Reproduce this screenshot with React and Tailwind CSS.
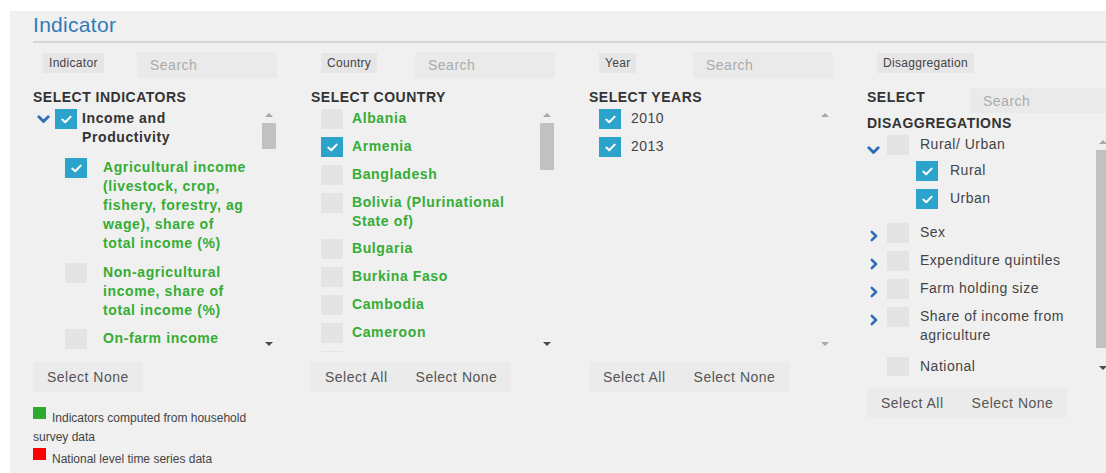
import React from 'react';

const FONT = "font-['Liberation_Sans',Arial,sans-serif]";
const GREEN = 'text-[14px] font-bold leading-[19px] tracking-[0.6px] text-[#35ad35]';
const PLAIN = 'text-[14px] leading-[19px] tracking-[0.5px] text-[#444]';
const HEAD = 'text-[14px] font-bold leading-[16px] tracking-[0.5px] text-[#333]';

function Box({ checked }) {
  if (checked) {
    return (
      <span className="flex h-[20px] w-[22px] shrink-0 items-center justify-center bg-[#2ba3ca]">
        <svg width="11" height="9" viewBox="0 0 11 9" fill="none">
          <path d="M1.3 4.6 L4.2 7.3 L9.7 1.6" stroke="#fff" strokeWidth="2" strokeLinecap="round" strokeLinejoin="round" />
        </svg>
      </span>
    );
  }
  return <span className="block h-[20px] w-[22px] shrink-0 bg-[#e4e4e4]" />;
}

function ChevronDown() {
  return (
    <svg width="13" height="9" viewBox="0 0 13 9" fill="none">
      <path d="M1.8 1.8 L6.5 6.6 L11.2 1.8" stroke="#2d6db4" strokeWidth="2.8" strokeLinecap="round" strokeLinejoin="round" />
    </svg>
  );
}

function ChevronRight() {
  return (
    <svg width="8" height="12" viewBox="0 0 8 12" fill="none">
      <path d="M1.8 1.8 L6 6 L1.8 10.2" stroke="#2d6db4" strokeWidth="2.6" strokeLinecap="round" strokeLinejoin="round" />
    </svg>
  );
}

function Scrollbar({ thumb, downDark = true }) {
  return (
    <div className="flex h-full w-[14px] shrink-0 flex-col items-center">
      <div className="flex h-[16px] items-center">
        <span className="h-0 w-0 border-x-[4.5px] border-b-[4px] border-x-transparent border-b-[#a8a8a8]" />
      </div>
      {thumb ? <div className={`w-[14px] bg-[#c1c1c1] ${thumb}`} /> : null}
      <div className="flex-1" />
      <div className="flex h-[16px] items-center">
        {downDark ? (
          <span className="h-0 w-0 border-x-[4px] border-t-[4px] border-x-transparent border-t-[#4a4a4a]" />
        ) : (
          <span className="h-0 w-0 border-x-[4px] border-t-[4px] border-x-transparent border-t-[#a8a8a8]" />
        )}
      </div>
    </div>
  );
}

function Search({ h26 = true }) {
  return (
    <input
      placeholder="Search"
      className={`w-[140px] shrink-0 bg-[#eaeaea] pl-[13px] text-[14px] tracking-[0.5px] outline-none placeholder:text-[#ababab] ${h26 ? 'h-[26px]' : 'h-[25px]'}`}
    />
  );
}

function ColumnHead({ tag, search = true }) {
  return (
    <div className="flex h-[26px] items-start">
      <div className="flex w-[104px] shrink-0 pl-[10px]">
        <span className="mt-[1px] h-[20px] bg-[#e6e6e6] px-[6px] text-[12px] leading-[20px] tracking-[0.3px] text-[#444]">
          {tag}
        </span>
      </div>
      {search ? <Search /> : null}
    </div>
  );
}

function Buttons({ all = true, className = '' }) {
  const btn = 'h-[30px] px-[14px] text-[14px] tracking-[0.5px] text-[#555]';
  return (
    <div className={`flex w-fit bg-[#ebebeb] ${className}`}>
      {all ? <button className={btn}>Select All</button> : null}
      <button className={btn}>Select None</button>
    </div>
  );
}

function IndicatorColumn() {
  return (
    <div className="w-[278px] shrink-0">
      <ColumnHead tag="Indicator" />
      <div className={`mt-[11px] ${HEAD}`}>SELECT INDICATORS</div>
      <div className="mt-[2px] flex h-[245px] w-[243px]">
        <div className="flex-1 overflow-hidden pt-[2px]">
          <div className="flex items-start">
            <div className="flex h-[20px] w-[22px] shrink-0 items-center pl-[4px]">
              <ChevronDown />
            </div>
            <Box checked />
            <span className="ml-[5px] w-[150px] text-[14px] font-bold leading-[19px] tracking-[0.6px] text-[#333]">
              Income and Productivity
            </span>
          </div>
          <div className="mt-[11px] flex items-start pl-[32px]">
            <Box checked />
            <span className={`ml-[16px] w-[146px] ${GREEN}`}>
              Agricultural income (livestock, crop, fishery, forestry, ag wage), share of total income (%)
            </span>
          </div>
          <div className="mt-[10px] flex items-start pl-[32px]">
            <Box />
            <span className={`ml-[16px] w-[146px] ${GREEN}`}>Non-agricultural income, share of total income (%)</span>
          </div>
          <div className="mt-[9px] flex items-start pl-[32px]">
            <Box />
            <span className={`ml-[16px] w-[146px] ${GREEN}`}>On-farm income</span>
          </div>
        </div>
        <Scrollbar thumb="h-[26px]" />
      </div>
      <Buttons all={false} className="mt-[10px]" />
      <div className="mt-[15px] w-[245px] text-[12px] leading-[19px] text-[#444]">
        <p>
          <span className="mr-[6px] inline-block h-[12px] w-[13px] bg-[#2eaa2e] align-[3px]" />
          Indicators computed from household survey data
        </p>
        <p className="mt-[1px]">
          <span className="mr-[6px] inline-block h-[12px] w-[13px] bg-[#ff0000] align-[3px]" />
          National level time series data
        </p>
      </div>
    </div>
  );
}

const countries = [
  ['Albania', false],
  ['Armenia', true],
  ['Bangladesh', false],
  ['Bolivia (Plurinational State of)', false],
  ['Bulgaria', false],
  ['Burkina Faso', false],
  ['Cambodia', false],
  ['Cameroon', false],
];

function CountryColumn() {
  return (
    <div className="w-[278px] shrink-0">
      <ColumnHead tag="Country" />
      <div className={`mt-[11px] ${HEAD}`}>SELECT COUNTRY</div>
      <div className="mt-[2px] flex h-[245px] w-[243px]">
        <div className="flex flex-1 flex-col gap-[8px] overflow-hidden pl-[10px] pt-[2px]">
          {countries.map(([name, on]) => (
            <div key={name} className="flex shrink-0 items-start">
              <Box checked={on} />
              <span className={`ml-[9px] flex-1 ${GREEN}`}>{name}</span>
            </div>
          ))}
          {/* next row, scrolled mostly out of view */}
          <div className="flex shrink-0 items-start">
            <Box />
          </div>
        </div>
        <Scrollbar thumb="h-[47px]" />
      </div>
      <Buttons className="mt-[10px]" />
    </div>
  );
}

function YearColumn() {
  return (
    <div className="w-[278px] shrink-0">
      <ColumnHead tag="Year" />
      <div className={`mt-[11px] ${HEAD}`}>SELECT YEARS</div>
      <div className="mt-[2px] flex h-[245px] w-[243px]">
        <div className="flex flex-1 flex-col gap-[8px] overflow-hidden pl-[10px] pt-[2px]">
          {['2010', '2013'].map((y) => (
            <div key={y} className="flex items-start">
              <Box checked />
              <span className={`ml-[10px] text-[#333] ${PLAIN}`}>{y}</span>
            </div>
          ))}
        </div>
        <Scrollbar downDark={false} />
      </div>
      <Buttons className="mt-[10px]" />
    </div>
  );
}

function DisaggRow({ label, chevron, className = '' }) {
  return (
    <div className={`flex items-start ${className}`}>
      <div className="flex h-[20px] w-[20px] shrink-0 pl-[3px] pt-[7px]">{chevron ? <ChevronRight /> : null}</div>
      <Box />
      <span className={`ml-[11px] flex-1 ${PLAIN}`}>{label}</span>
    </div>
  );
}

function DisaggColumn() {
  return (
    <div className="w-[277px] shrink-0">
      <ColumnHead tag="Disaggregation" search={false} />
      <div className="mt-[10px] flex items-start">
        <div className={`mt-[1px] w-[103px] shrink-0 ${HEAD}`}>SELECT</div>
        <Search h26={false} />
      </div>
      <div className={`mt-[2px] ${HEAD} tracking-[-0.1px]`}>DISAGGREGATIONS</div>
      <div className="mt-[3px] flex h-[242px] w-[243px]">
        <div className="flex-1 overflow-hidden pt-[1px]">
          <div className="flex items-start">
            <div className="flex h-[20px] w-[20px] shrink-0 items-end">
              <ChevronDown />
            </div>
            <Box />
            <span className={`ml-[11px] ${PLAIN}`}>Rural/ Urban</span>
          </div>
          <div className="mt-[6px] flex items-start pl-[49px]">
            <Box checked />
            <span className={`ml-[12px] ${PLAIN}`}>Rural</span>
          </div>
          <div className="mt-[8px] flex items-start pl-[49px]">
            <Box checked />
            <span className={`ml-[12px] ${PLAIN}`}>Urban</span>
          </div>
          <DisaggRow label="Sex" chevron className="mt-[14px]" />
          <DisaggRow label="Expenditure quintiles" chevron className="mt-[8px]" />
          <DisaggRow label="Farm holding size" chevron className="mt-[8px]" />
          <DisaggRow label="Share of income from agriculture" chevron className="mt-[8px]" />
          <DisaggRow label="National" className="mt-[12px]" />
        </div>
        <Scrollbar thumb="h-[198px]" />
      </div>
      <Buttons className="mt-[12px]" />
    </div>
  );
}

export default function App() {
  return (
    <div className={`h-[473px] w-[1106px] overflow-hidden bg-white pl-[10px] pt-[11px] ${FONT}`}>
      <div className="h-[462px] w-[1150px] bg-[#f0f0f0] pl-[23px] pt-[1px]">
        <div className="border-b-2 border-[#d6d6d6] pb-[3px] text-[21px] leading-[26px] tracking-[0.3px] text-[#337ab7]">
          Indicator
        </div>
        <div className="mt-[9px] flex">
          <IndicatorColumn />
          <CountryColumn />
          <YearColumn />
          <DisaggColumn />
        </div>
      </div>
    </div>
  );
}
